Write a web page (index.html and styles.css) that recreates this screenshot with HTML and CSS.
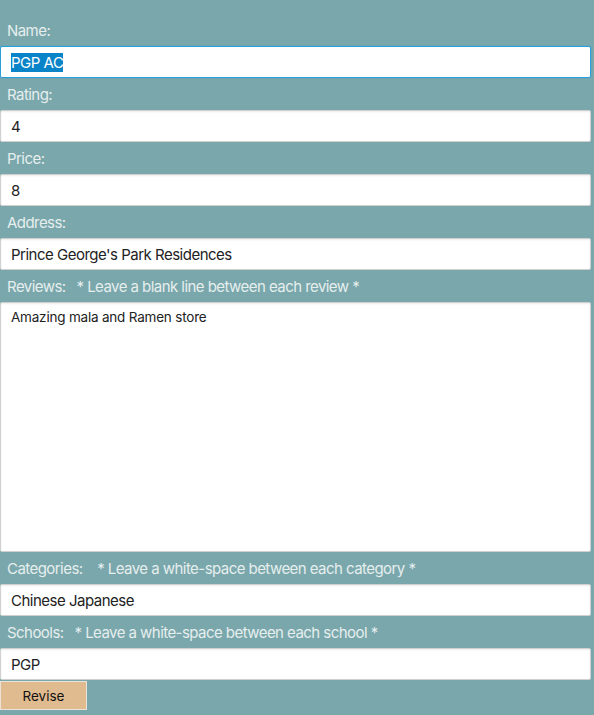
FILE: index.html
```html
<!DOCTYPE html>
<html>
<head>
<meta charset="utf-8">
<link rel="stylesheet" href="styles.css">
</head>
<body>
<form class="form">
  <label class="label" for="name">Name:</label>
  <input class="field field-active" id="name" type="text" value="PGP AC">
  <label class="label" for="rating">Rating:</label>
  <input class="field" id="rating" type="text" value="4">
  <label class="label" for="price">Price:</label>
  <input class="field" id="price" type="text" value="8">
  <label class="label" for="address">Address:</label>
  <input class="field" id="address" type="text" value="Prince George's Park Residences">
  <label class="label" for="reviews">Reviews:&nbsp;&nbsp; * Leave a blank line between each review *</label>
  <textarea class="area" id="reviews">Amazing mala and Ramen store</textarea>
  <label class="label" for="categories">Categories:&nbsp;&nbsp;&nbsp; * Leave a white-space between each category *</label>
  <input class="field" id="categories" type="text" value="Chinese Japanese">
  <label class="label" for="schools">Schools:&nbsp;&nbsp; * Leave a white-space between each school *</label>
  <input class="field" id="schools" type="text" value="PGP">
  <button class="btn" type="button">Revise</button>
</form>
<script src="script.js"></script>
</body>
</html>
```
FILE: styles.css
```css
html, body {
  margin: 0;
  padding: 0;
  background: #79a7ab;
  height: 100%;
}
body {
  font-family: Inter, "Noto Sans", sans-serif;
}
.form {
  display: flex;
  flex-direction: column;
  align-items: flex-start;
  width: 591px;
  padding-top: 14px;
}
.label {
  display: flex;
  align-items: center;
  height: 32px;
  padding-left: 7px;
  color: #e6eeee;
  font-size: 15px;
  letter-spacing: -0.55px;
  white-space: pre;
}
.field {
  box-sizing: border-box;
  width: 591px;
  height: 32px;
  margin: 0;
  padding: 0 10px;
  border: 1px solid #d0d0d0;
  border-radius: 2px;
  background: #fff;
  box-shadow: inset 0 1px 2px rgba(0,0,0,0.08);
  font-family: Inter, "Noto Sans", sans-serif;
  font-size: 15px;
  letter-spacing: -0.5px;
  color: #222;
  outline: none;
}
.field-active {
  border-color: #2b9fd9;
  box-shadow: 0 0 0 1px rgba(43,159,217,0.15);
}
.field::selection {
  background: #0a84c8;
  color: #fff;
}
.area {
  box-sizing: border-box;
  width: 591px;
  height: 250px;
  margin: 0;
  padding: 6px 10px;
  border: 1px solid #d0d0d0;
  border-radius: 2px;
  background: #fff;
  box-shadow: inset 0 1px 2px rgba(0,0,0,0.08);
  font-family: Inter, "Noto Sans", sans-serif;
  font-size: 13.5px;
  letter-spacing: -0.2px;
  color: #222;
  resize: none;
  outline: none;
}
.btn {
  box-sizing: border-box;
  width: 87px;
  height: 29px;
  margin: 1px 0 0;
  padding: 0;
  border: 1px solid #ebe3d8;
  background: #e0bb8f;
  font-family: Inter, "Noto Sans", sans-serif;
  font-size: 13.5px;
  color: #111;
}
```
FILE: script.js
```js
var el = document.getElementById('name');
el.focus();
el.setSelectionRange(0, el.value.length);
```
